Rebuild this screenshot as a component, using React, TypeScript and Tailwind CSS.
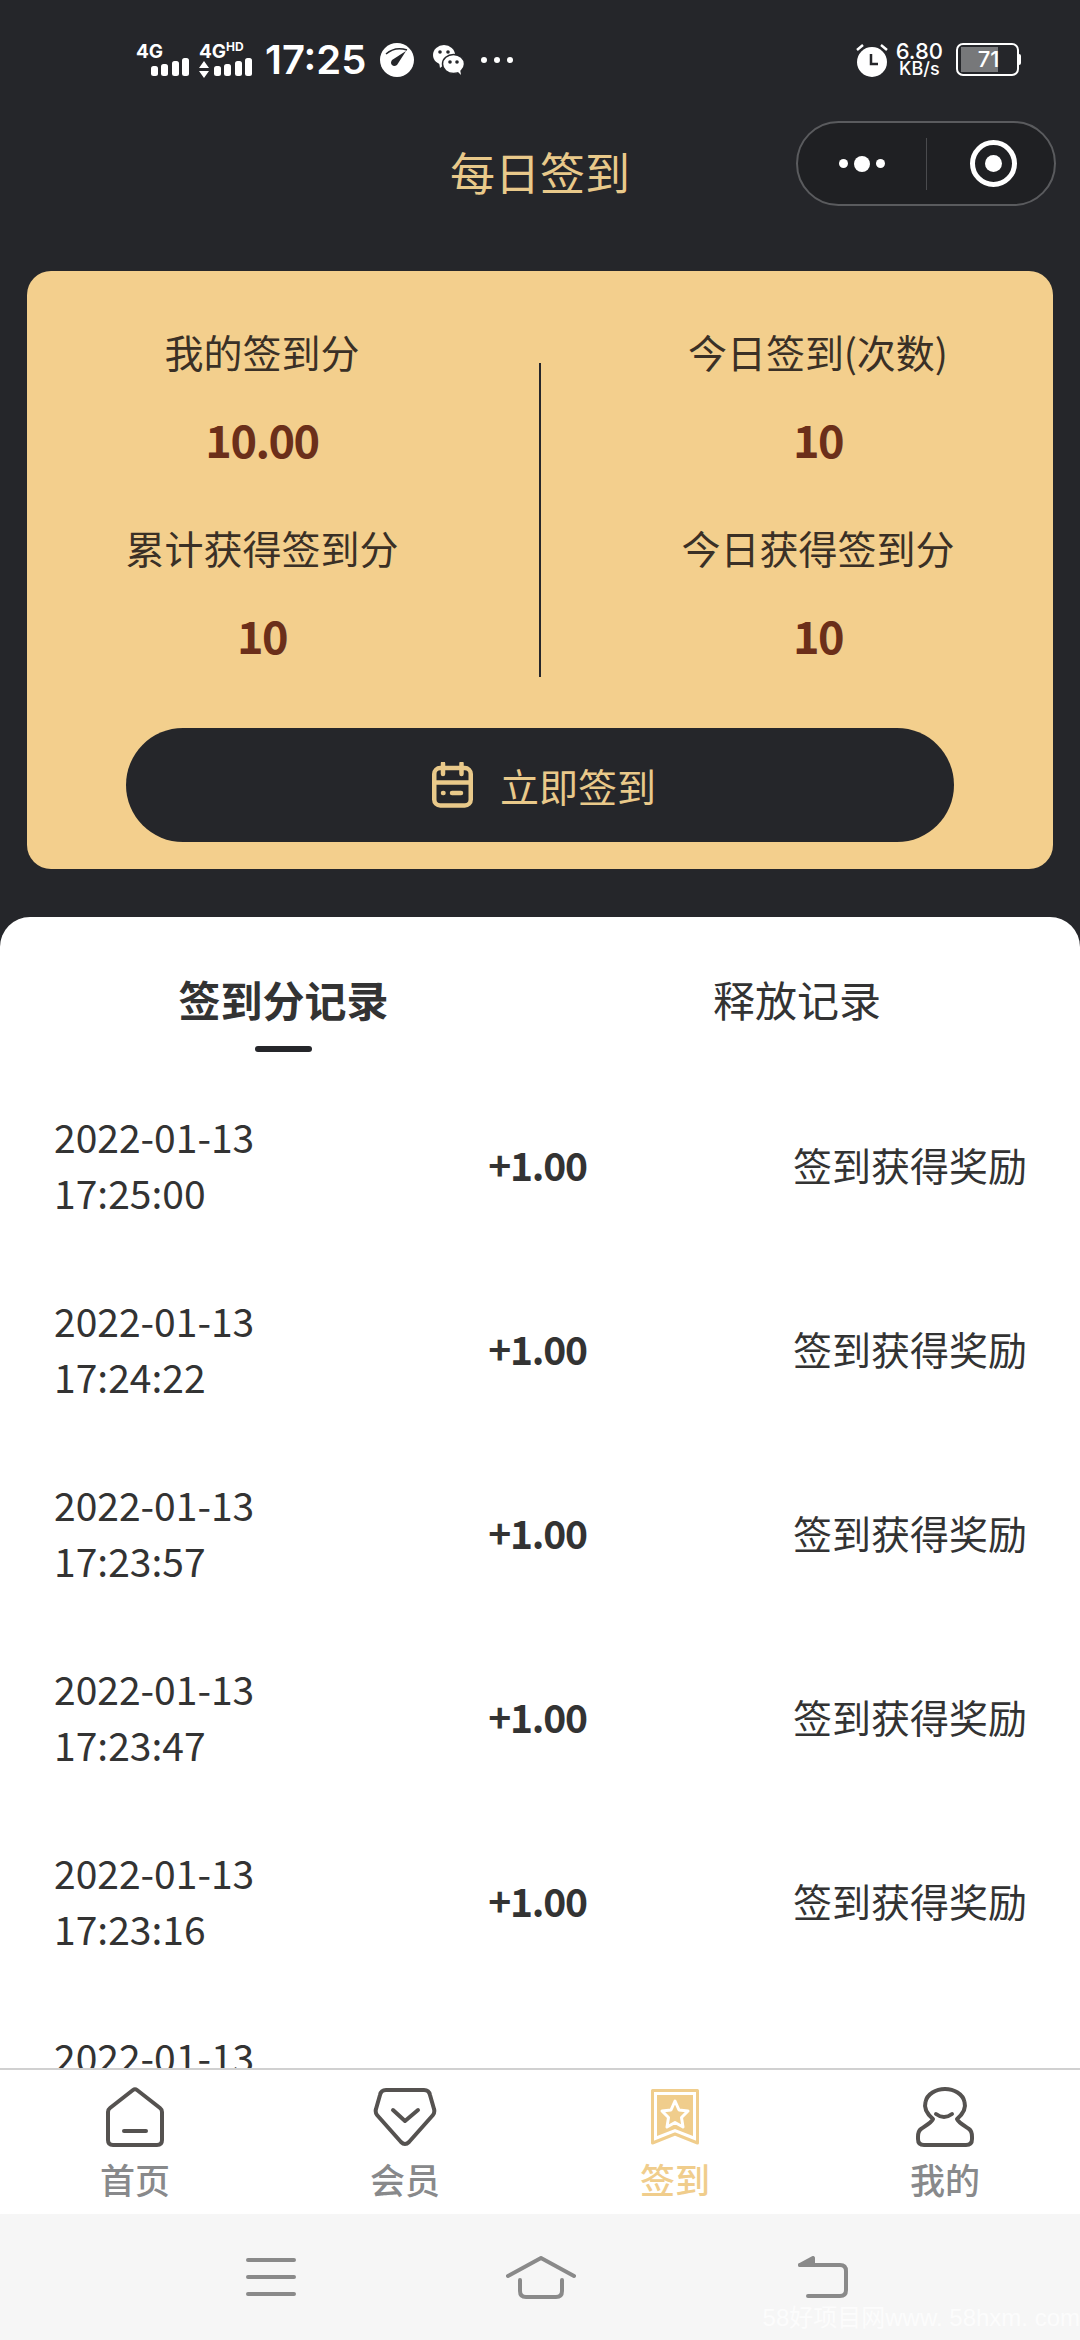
const cjk = "font-['Noto_Sans_CJK_SC','Noto_Sans',sans-serif]";

function Stat({ label, value }: { label: string; value: string }) {
  return (
    <div className="flex flex-col items-center">
      <div className="h-[56px] text-[39px] leading-[56px] text-[#3a3026] [word-spacing:-9px]">{label}</div>
      <div className="mt-[32px] h-[56px] text-[45px] leading-[56px] font-bold tracking-[-1.5px] text-[#6b2f1a]">{value}</div>
    </div>
  );
}

const records = ["17:25:00", "17:24:22", "17:23:57", "17:23:47", "17:23:16"];

function Record({ time }: { time: string }) {
  return (
    <div className="flex h-[184px] shrink-0 items-center justify-between pl-[54px] pr-[53px] text-[39px] text-[#333333]">
      <div className="w-[330px] leading-[56px]">
        <div>2022-01-13</div>
        <div>{time}</div>
      </div>
      <div className="w-[140px] pr-[6px] text-center font-bold tracking-[-1.2px]">+1.00</div>
      <div className="w-[330px] text-right">签到获得奖励</div>
    </div>
  );
}

function NavIcon({ name }: { name: string }) {
  if (name === "home")
    return (
      <svg width="60" height="60" viewBox="0 0 60 60" fill="none" stroke="#555250" strokeWidth="4" strokeLinejoin="round" strokeLinecap="round">
        <path d="M28 3 Q30 1.500 32 3 L55 21 Q57 22.500 57 25 V53 Q57 58 52 58 H8 Q3 58 3 53 V25 Q3 22.500 5 21 Z" />
        <path d="M19 44 H41" />
      </svg>
    );
  if (name === "vip")
    return (
      <svg width="64" height="60" viewBox="0 0 64 60" fill="none" stroke="#555250" strokeWidth="4" strokeLinejoin="round" strokeLinecap="round">
        <path d="M13 3 H51 Q56 3 57 8 L61 22 Q62 25 60 28 L36 55 Q32 59 28 55 L4 28 Q2 25 3 22 L7 8 Q8 3 13 3 Z" />
        <path d="M20 23 L32 34 L45 23" />
      </svg>
    );
  if (name === "sign")
    return (
      <svg width="48" height="56" viewBox="0 0 48 56" fill="none">
        <path d="M1.500 1.500 H46.500 V54 L24 45 L1.500 54 Z" stroke="#f0cd8c" strokeWidth="3" strokeLinejoin="round" />
        <path d="M6 6 H42 V47 L24 40 L6 47 Z" fill="#f0cd8c" />
        <path d="M24 12 L28 21 L37 22 L30.500 28.500 L32 38 L24 33.500 L16 38 L17.500 28.500 L11 22 L20 21 Z" fill="#f0cd8c" stroke="#ffffff" strokeWidth="3" strokeLinejoin="round" />
      </svg>
    );
  return (
    <svg width="60" height="60" viewBox="0 0 60 60" fill="none" stroke="#555250" strokeWidth="4" strokeLinejoin="round" strokeLinecap="round">
      <path d="M18 32 C11 26 9 20 10.500 15 C12 7 21 2 30 2 C39 2 48 7 49.500 15 C51 20 49 26 42 32 C43 35 48 38 54 42 C57 44 57 47 57 50 V52 Q57 58 51 58 H9 Q3 58 3 52 V50 C3 47 3 44 6 42 C12 38 17 35 18 32 Z" />
      <path d="M21 27 Q29 33 37 27" />
    </svg>
  );
}

function NavItem({ name, label, active }: { name: string; label: string; active?: boolean }) {
  return (
    <div className="flex flex-1 flex-col items-center">
      <div className="flex h-[60px] items-center justify-center">
        <NavIcon name={name} />
      </div>
      <div className={`mt-[12px] text-[35px] leading-[40px] font-medium ${active ? "text-[#f0cd8c]" : "text-[#88898b]"}`}>{label}</div>
    </div>
  );
}

function Signal() {
  const heights = [10, 12, 15, 18];
  return (
    <div className="flex items-end gap-[3.500px]">
      {heights.map((h, i) => (
        <div key={i} style={{ height: h }} className="w-[7px] rounded-[2.500px] bg-white" />
      ))}
    </div>
  );
}

export default function App() {
  return (
    <div className={`relative flex h-[2340px] w-[1080px] flex-col overflow-hidden bg-[#25262a] ${cjk}`}>
      {/* status bar */}
      <div className="flex h-[120px] items-start justify-between pl-[136px] pr-[59px] pt-[43px] text-white">
        <div className="flex h-[33px] items-center">
          <div className="relative h-[33px] w-[53px]">
            <span className="absolute left-0 top-[-5px] font-['Inter',sans-serif] text-[19px] font-bold">4G</span>
            <div className="absolute bottom-0 right-0"><Signal /></div>
          </div>
          <div className="relative ml-[10px] h-[33px] w-[53px]">
            <span className="absolute left-0 top-[-5px] whitespace-nowrap font-['Inter',sans-serif] text-[19px] font-bold">4G<span className="align-top text-[12px]">HD</span></span>
            <div className="absolute bottom-0 right-0"><Signal /></div>
            <svg className="absolute bottom-[-2px] left-0" width="10" height="17" viewBox="0 0 10 17" fill="#fff"><path d="M5 0 L10 7 H0 Z M5 17 L10 10 H0 Z" /></svg>
          </div>
          <span className="ml-[13px] font-['Inter',sans-serif] text-[40px] leading-[33px] font-semibold">17:25</span>
          <svg className="ml-[14px]" width="34" height="34" viewBox="0 0 34 34">
            <circle cx="17" cy="17" r="17" fill="#fff" />
            <path d="M6 11 Q15 3 27 7" fill="none" stroke="#25262a" strokeWidth="1.500" />
            <path d="M26 8 L12 17 Q10 20 12 22 Q14 24 17 22 Z" fill="#25262a" />
          </svg>
          <svg className="ml-[18px]" width="32" height="32" viewBox="0 0 32 32" fill="#fff">
            <ellipse cx="12" cy="11" rx="11" ry="10" />
            <path d="M7 18 L8 24 L13 20 Z" />
            <ellipse cx="21.500" cy="20" rx="11" ry="9.500" stroke="#25262a" strokeWidth="1.500" />
            <path d="M25 27 L29 31 L28 25 Z" />
            <circle cx="8" cy="8" r="1.800" fill="#25262a" /><circle cx="16" cy="8" r="1.800" fill="#25262a" />
            <circle cx="18" cy="18" r="1.800" fill="#25262a" /><circle cx="25" cy="18" r="1.800" fill="#25262a" />
          </svg>
          <div className="ml-[17px] flex gap-[7px]">
            <div className="h-[6px] w-[6px] rounded-full bg-white" />
            <div className="h-[6px] w-[6px] rounded-full bg-white" />
            <div className="h-[6px] w-[6px] rounded-full bg-white" />
          </div>
        </div>
        <div className="flex h-[33px] items-center">
          <svg width="34" height="34" viewBox="0 0 34 34">
            <circle cx="17" cy="19" r="15" fill="#fff" />
            <path d="M2 7 L8 2 M32 7 L26 2" stroke="#fff" strokeWidth="2.500" />
            <path d="M16 11 V21 H23" fill="none" stroke="#25262a" strokeWidth="2.500" />
          </svg>
          <div className="ml-[7px] flex flex-col items-center font-['Inter',sans-serif] font-medium">
            <span className="text-[22px] leading-[18px]">6.80</span>
            <span className="text-[18px] leading-[17px]">KB/s</span>
          </div>
          <div className="relative ml-[13px] h-[33px] w-[63px] overflow-hidden rounded-[7px] border-[2px] border-white">
            <div className="absolute inset-y-[2px] left-[3px] w-[37px] bg-[#77787a]" />
            <span className="absolute inset-0 pl-[2px] text-center font-['Inter',sans-serif] text-[22px] leading-[29px] font-medium">71</span>
          </div>
          <div className="h-[11px] w-[2px] rounded-r-[2px] bg-white" />
        </div>
      </div>

      {/* header */}
      <div className="relative flex h-[120px] items-start justify-center">
        <span className="mt-[22px] text-[45px] leading-[60px] text-[#e9c98a]">每日签到</span>
        <div className="absolute right-[24px] top-[1px] flex h-[85px] w-[260px] items-center rounded-full border-[2px] border-[#5a5b5e] bg-[#1f2023]">
          <div className="flex w-[128px] items-center justify-center gap-[6px]">
            <div className="h-[9px] w-[9px] rounded-full bg-white" />
            <div className="h-[16px] w-[16px] rounded-full bg-white" />
            <div className="h-[9px] w-[9px] rounded-full bg-white" />
          </div>
          <div className="h-[52px] w-px bg-[#4a4b4e]" />
          <div className="flex flex-1 items-center justify-center pl-[6px]">
            <div className="flex h-[47px] w-[47px] items-center justify-center rounded-full border-[5px] border-white">
              <div className="h-[17px] w-[17px] rounded-full bg-white" />
            </div>
          </div>
        </div>
      </div>

      {/* card */}
      <div className="mx-[27px] mt-[31px] h-[598px] rounded-[24px] bg-[#f3cf8d] pt-[52px]">
        <div className="flex items-start pl-[49px]">
          <div className="flex w-[372px] flex-col gap-[52px]">
            <Stat label="我的签到分" value="10.00" />
            <Stat label="累计获得签到分" value="10" />
          </div>
          <div className="mx-[91px] mt-[40px] h-[314px] w-[2px] bg-[#25262a]" />
          <div className="flex w-[372px] flex-col gap-[52px]">
            <Stat label="今日签到 (次数)" value="10" />
            <Stat label="今日获得签到分" value="10" />
          </div>
        </div>
        <div className="mx-[99px] mt-[51px] flex h-[114px] items-center justify-center rounded-full bg-[#25262a] pl-[8px]">
          <svg width="41" height="46" viewBox="0 0 41 46" fill="none" stroke="#e9c98a" strokeWidth="4.500" strokeLinecap="round">
            <rect x="2.250" y="6" width="36.500" height="37.500" rx="6" />
            <path d="M11 1.500 V12 M29.500 1.500 V12 M2 20.500 H39" />
            <path d="M11 31 H11.500" />
            <path d="M20 31 H29" />
          </svg>
          <span className="ml-[27px] text-[39px] text-[#e9c98a]">立即签到</span>
        </div>
      </div>

      {/* sheet */}
      <div className="mt-[48px] flex min-h-0 flex-1 flex-col overflow-hidden rounded-t-[30px] bg-white">
        <div className="flex h-[155px] shrink-0">
          <div className="flex w-[567px] flex-col items-center pt-[52px]">
            <span className="text-[42px] leading-[60px] font-bold text-[#333333]">签到分记录</span>
            <div className="mt-[17px] h-[6px] w-[57px] rounded-full bg-[#25262a]" />
          </div>
          <div className="flex w-[460px] justify-center pt-[52px]">
            <span className="text-[42px] leading-[60px] text-[#333333]">释放记录</span>
          </div>
        </div>
        <div className="flex min-h-0 flex-1 flex-col overflow-hidden">
          {records.map((t) => (
            <Record key={t} time={t} />
          ))}
          <Record time="17:23:01" />
        </div>
        {/* tab bar */}
        <div className="flex h-[146px] shrink-0 border-t-[2px] border-[#d0d0d0] bg-white pt-[17px]">
          <NavItem name="home" label="首页" />
          <NavItem name="vip" label="会员" />
          <NavItem name="sign" label="签到" active />
          <NavItem name="me" label="我的" />
        </div>
        {/* system nav */}
        <div className="relative flex h-[126px] shrink-0 items-center bg-[#f6f6f6]">
          <svg className="ml-[246px]" width="50" height="38" viewBox="0 0 50 38" stroke="#8a8a8a" strokeWidth="4" strokeLinecap="round">
            <path d="M2 2 H48 M2 19 H48 M2 36 H48" />
          </svg>
          <svg className="ml-[210px]" width="70" height="43" viewBox="0 0 70 43" fill="none" stroke="#8a8a8a" strokeWidth="4" strokeLinecap="round" strokeLinejoin="round">
            <path d="M2 20 L35 2 L68 20" />
            <path d="M14 24 V35 Q14 41 20 41 H50 Q56 41 56 35 V24" />
          </svg>
          <svg className="ml-[222px]" width="50" height="42" viewBox="0 0 50 42" fill="none" stroke="#8a8a8a" strokeWidth="4" strokeLinecap="round" strokeLinejoin="round">
            <path d="M2 9 H42 Q48 9 48 15 V34 Q48 40 42 40 H10" />
            <path d="M2 9 L15 2 V9 Z" fill="#8a8a8a" stroke="#8a8a8a" />
          </svg>
          <span className="absolute bottom-[4px] right-[0px] whitespace-nowrap font-['Liberation_Sans','Noto_Sans_CJK_SC',sans-serif] text-[24px] text-[#fcfcfc]">58好项目网www. 58hxm. com</span>
        </div>
      </div>
    </div>
  );
}
